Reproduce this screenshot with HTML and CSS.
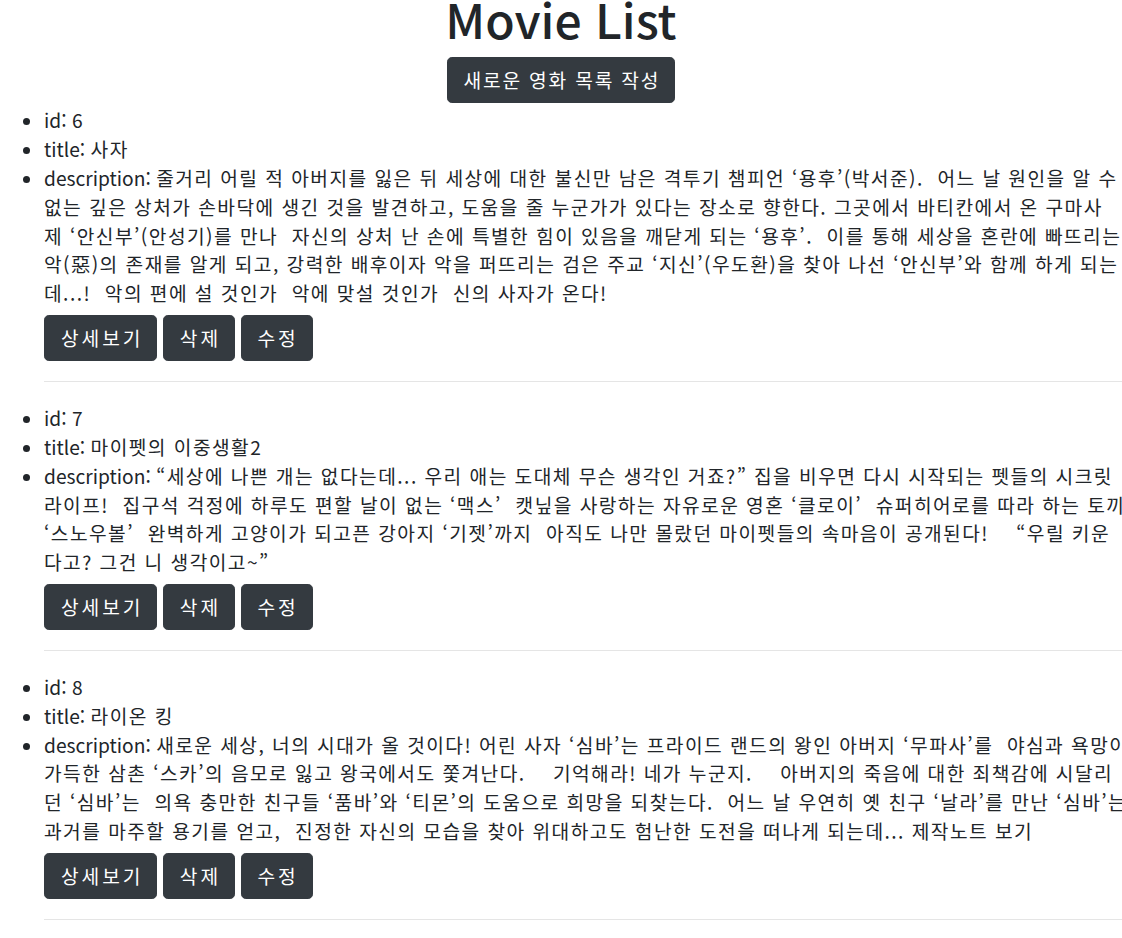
FILE: index.html
```html
<!DOCTYPE html>
<html lang="ko">
<head>
<meta charset="utf-8">
<title>Movie List</title>
<link rel="stylesheet" href="styles.css">
</head>
<body>
<div class="page">
  <h1 class="page-title">Movie List</h1>
  <div class="create">
    <a class="btn btn-wide" href="#">새로운 영화 목록 작성</a>
  </div>

  <section class="movie">
    <ul class="fields">
      <li><span class="label">id:</span> <span class="val">6</span></li>
      <li><span class="label">title:</span> <span class="val">사자</span></li>
      <li><span class="label">description:</span> <span class="val desc">줄거리 어릴 적 아버지를 잃은 뒤 세상에 대한 불신만 남은 격투기 챔피언 ‘용후’(박서준).  어느 날 원인을 알 수<br>없는 깊은 상처가 손바닥에 생긴 것을 발견하고, 도움을 줄 누군가가 있다는 장소로 향한다. 그곳에서 바티칸에서 온 구마사<br>제 ‘안신부’(안성기)를 만나  자신의 상처 난 손에 특별한 힘이 있음을 깨닫게 되는 ‘용후’.  이를 통해 세상을 혼란에 빠뜨리는<br>악(惡)의 존재를 알게 되고, 강력한 배후이자 악을 퍼뜨리는 검은 주교 ‘지신’(우도환)을 찾아 나선 ‘안신부’와 함께 하게 되는<br>데...!  악의 편에 설 것인가  악에 맞설 것인가  신의 사자가 온다!</span></li>
    </ul>
    <div class="actions">
      <a class="btn" href="#">상세보기</a>
      <a class="btn" href="#">삭제</a>
      <a class="btn" href="#">수정</a>
    </div>
    <hr class="divider">
  </section>

  <section class="movie">
    <ul class="fields">
      <li><span class="label">id:</span> <span class="val">7</span></li>
      <li><span class="label">title:</span> <span class="val">마이펫의 이중생활2</span></li>
      <li><span class="label">description:</span> <span class="val desc">“세상에 나쁜 개는 없다는데... 우리 애는 도대체 무슨 생각인 거죠?” 집을 비우면 다시 시작되는 펫들의 시크릿<br>라이프!  집구석 걱정에 하루도 편할 날이 없는 ‘맥스’  캣닢을 사랑하는 자유로운 영혼 ‘클로이’  슈퍼히어로를 따라 하는 토끼<br>‘스노우볼’  완벽하게 고양이가 되고픈 강아지 ‘기젯’까지  아직도 나만 몰랐던 마이펫들의 속마음이 공개된다!    “우릴 키운<br>다고? 그건 니 생각이고~”</span></li>
    </ul>
    <div class="actions">
      <a class="btn" href="#">상세보기</a>
      <a class="btn" href="#">삭제</a>
      <a class="btn" href="#">수정</a>
    </div>
    <hr class="divider">
  </section>

  <section class="movie">
    <ul class="fields">
      <li><span class="label">id:</span> <span class="val">8</span></li>
      <li><span class="label">title:</span> <span class="val">라이온 킹</span></li>
      <li><span class="label">description:</span> <span class="val desc">새로운 세상, 너의 시대가 올 것이다! 어린 사자 ‘심바’는 프라이드 랜드의 왕인 아버지 ‘무파사’를  야심과 욕망이<br>가득한 삼촌 ‘스카’의 음모로 잃고 왕국에서도 쫓겨난다.    기억해라! 네가 누군지.    아버지의 죽음에 대한 죄책감에 시달리<br>던 ‘심바’는  의욕 충만한 친구들 ‘품바’와 ‘티몬’의 도움으로 희망을 되찾는다.  어느 날 우연히 옛 친구 ‘날라’를 만난 ‘심바’는<br>과거를 마주할 용기를 얻고,  진정한 자신의 모습을 찾아 위대하고도 험난한 도전을 떠나게 되는데... 제작노트 보기</span></li>
    </ul>
    <div class="actions">
      <a class="btn" href="#">상세보기</a>
      <a class="btn" href="#">삭제</a>
      <a class="btn" href="#">수정</a>
    </div>
    <hr class="divider">
  </section>
</div>
</body>
</html>
```

FILE: styles.css
```css
html, body {
  margin: 0;
  padding: 0;
}

body {
  font-family: "Noto Sans CJK KR", "Noto Sans", sans-serif;
  font-size: 19.2px;
  line-height: 28.8px;
  color: #212529;
  background: #ffffff;
  overflow: hidden;
}

.page {
  margin-top: -10px;
}

.page-title {
  margin: 0 0 9.6px;
  font-size: 48px;
  font-weight: 500;
  line-height: 57.6px;
  text-align: center;
  color: #212529;
}

.create {
  text-align: center;
  margin-bottom: 3px;
}

.btn {
  display: inline-block;
  padding: 7.7px 12.9px 7.7px 15.9px;
  font-size: 19.2px;
  line-height: 28.8px;
  color: #ffffff;
  background: #343a40;
  border: 1px solid #343a40;
  border-radius: 4.8px;
  text-decoration: none;
  letter-spacing: 3px;
  vertical-align: top;
}

.btn-wide {
  letter-spacing: 1.8px;
  padding-left: 15.4px;
  padding-right: 13.6px;
}

.movie {
  padding-left: 44px;
}

.fields {
  margin: 0;
  padding: 0;
  list-style: disc;
  white-space: nowrap;
}

.val {
  letter-spacing: 1.45px;
}

.desc {
  white-space: pre;
}

.actions {
  margin-top: 7px;
  white-space: nowrap;
  font-size: 0;
  display: flex;
  gap: 5.5px;
}

.divider {
  margin: 19.5px 0 22.5px;
  border: 0;
  border-top: 1px solid rgba(0, 0, 0, 0.1);
  height: 0;
}
```
